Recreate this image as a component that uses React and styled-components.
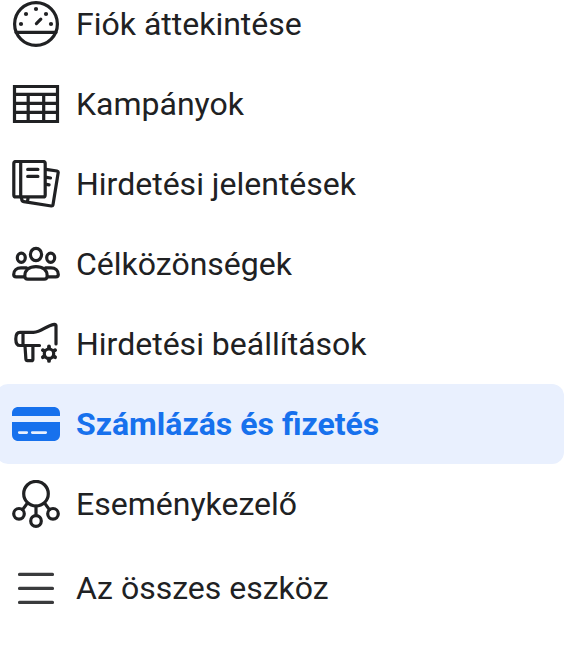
import React from "react";
import styled, { createGlobalStyle } from "styled-components";

const COLORS = {
  text: "#202123",
  primary: "#1771ed",
  selected: "#e9f0fe",
  menu: "#3a3b3d",
};

const AccountIcon = () => (
  <Icon viewBox="0 0 48 48">
    <circle cx="24" cy="24" r="21.4" />
    <path d="M4 32.3h40M24.4 23.6l4.4-4.4" />
    <Dot cx="9" cy="24" r="2.1" />
    <Dot cx="14" cy="14" r="2.1" />
    <Dot cx="24" cy="9" r="2.1" />
    <Dot cx="34" cy="14" r="2.1" />
    <Dot cx="39" cy="24" r="2.1" />
  </Icon>
);

const CampaignsIcon = () => (
  <Icon viewBox="0 0 48 48">
    <path d="M2.5 6.5h43v35h-43zM2.5 14.4h43M2.5 23.4h43M2.5 32.4h43M16.2 14.4v27M31.7 14.4v27" />
  </Icon>
);

const ReportsIcon = () => (
  <Icon viewBox="0 0 48 48">
    <rect x="1.8" y="1.5" width="31.4" height="35.4" rx="2" />
    <path d="M8.7 2v35M15.7 9.4h10.2M15.7 16.4h10.2" />
    <path d="M34 9.3l11 1.7c.9.2 1.3.8 1.2 1.6L41 44.8c-.2.9-.8 1.3-1.7 1.2l-27.5-4.4c-1.4-.2-2.2-1.3-2.2-3.3M16 38l-.5 4" />
    <path d="M34.5 17.3l4 .7M34.5 24.4l2.6.4" />
  </Icon>
);

const AudiencesIcon = () => (
  <Icon viewBox="0 0 48 48">
    <ellipse cx="24" cy="14.5" rx="5.6" ry="6.2" />
    <ellipse cx="9.3" cy="17.8" rx="4" ry="4.6" />
    <ellipse cx="38.7" cy="17.8" rx="4" ry="4.6" />
    <path d="M12.8 36c0-6 4.6-9.4 11.2-9.4S35.2 30 35.2 36c0 2-1 3.2-3 3.2H15.8c-2 0-3-1.2-3-3.2z" />
    <path d="M12.5 36.8H4.200c-1.700 0-2.500-.8-2.500-2.300 0-4 3-6.700 7.300-6.700h5.500" />
    <path d="M35.500 36.800h8.300c1.700 0 2.500-.8 2.500-2.300 0-4-3-6.700-7.300-6.700h-5.500" />
  </Icon>
);

const AdSettingsIcon = () => (
  <Icon viewBox="0 0 48 48">
    <path d="M27.5 25.500H8c-2.700 0-4.200-2.400-4.200-6.600S5.300 12.300 8 12.300h13.500C30 12.300 33.500 5.500 42.300 4.300c1.100-.1 1.700.5 1.700 1.500V24" />
    <path d="M11 12.500v13" />
    <path d="M13 26l.9 13.200c.1 1 .7 1.500 1.500 1.500h4c.9 0 1.500-.6 1.500-1.500V26" />
    <circle cx="37" cy="33.700" r="4.700" />
    <Teeth d="M37 28v-1.500M37 39.400v1.500M41.900 30.900l1.200-.7M41.900 36.500l1.200.7M32.100 30.900l-1.200-.7M32.100 36.500l-1.200.7" />
  </Icon>
);

const BillingIcon = () => (
  <FilledIcon viewBox="0 0 48 48">
    <path d="M0 16v-2.500C0 9.500 2.500 7 6.500 7h35c4 0 6.500 2.500 6.500 6.500V16zM0 22h48v12.500c0 4-2.500 6.500-6.500 6.500h-35C2.500 41 0 38.500 0 34.500z" />
    <CardLine d="M7.300 32.600h7.400M20.300 32.600h13.400" />
  </FilledIcon>
);

const EventsIcon = () => (
  <Icon viewBox="0 0 48 48">
    <circle cx="24" cy="13.700" r="12.300" />
    <circle cx="7" cy="33.800" r="5.300" />
    <circle cx="41" cy="33.800" r="5.300" />
    <circle cx="24" cy="41" r="5.300" />
    <path d="M24 26v9M10.600 29.600l4.400-6M37.400 29.600l-4.400-6" />
  </Icon>
);

const MenuIcon = () => (
  <Icon viewBox="0 0 48 48" $color={COLORS.menu}>
    <path d="M7.500 10.400h33M7.500 24.400h33M7.500 38.400h33" />
  </Icon>
);

const items = [
  { label: "Fiók áttekintése", icon: AccountIcon },
  { label: "Kampányok", icon: CampaignsIcon },
  { label: "Hirdetési jelentések", icon: ReportsIcon },
  { label: "Célközönségek", icon: AudiencesIcon },
  { label: "Hirdetési beállítások", icon: AdSettingsIcon },
  { label: "Számlázás és fizetés", icon: BillingIcon, selected: true },
  { label: "Eseménykezelő", icon: EventsIcon },
];

const App = () => {
  return (
    <>
      <GlobalStyle />
      <Sidebar>
        {items.map(({ label, icon: ItemIcon, selected }) => (
          <Item key={label} $selected={selected}>
            <ItemIcon />
            <Label>{label}</Label>
          </Item>
        ))}
        <AllTools>
          <MenuIcon />
          <Label>Az összes eszköz</Label>
        </AllTools>
      </Sidebar>
    </>
  );
};

const GlobalStyle = createGlobalStyle`
  body {
    margin: 0;
    background: white;
    overflow: hidden;
  }
`;

const Sidebar = styled.nav`
  display: flex;
  flex-direction: column;
  box-sizing: border-box;
  width: 568px;
  height: 666px;
  margin: -16px 0 0 -4px;
  font-family: Roboto, "Liberation Sans", sans-serif;
  font-size: 32px;
  line-height: 40px;
`;

const Item = styled.div`
  display: flex;
  align-items: center;
  flex: none;
  gap: 16px;
  box-sizing: border-box;
  height: 80px;
  padding: 0 16px;
  border-radius: 12px;
  color: ${(props) => (props.$selected ? COLORS.primary : COLORS.text)};
  background: ${(props) => (props.$selected ? COLORS.selected : "none")};
  font-weight: ${(props) => (props.$selected ? 700 : 400)};
  cursor: pointer;
`;

const AllTools = styled(Item)`
  margin-top: 4px;
`;

const Label = styled.span`
  white-space: nowrap;
`;

const Icon = styled.svg`
  flex: none;
  width: 48px;
  height: 48px;
  fill: none;
  stroke: ${(props) => props.$color || COLORS.text};
  stroke-width: 3.2;
  stroke-linecap: round;
`;

const FilledIcon = styled(Icon)`
  fill: ${COLORS.primary};
  stroke: none;
`;

const Dot = styled.circle`
  fill: ${COLORS.text};
  stroke: none;
`;

const Teeth = styled.path`
  stroke-width: 3.8;
`;

const CardLine = styled.path`
  stroke: ${COLORS.selected};
  stroke-width: 2.8;
`;

export default App;
